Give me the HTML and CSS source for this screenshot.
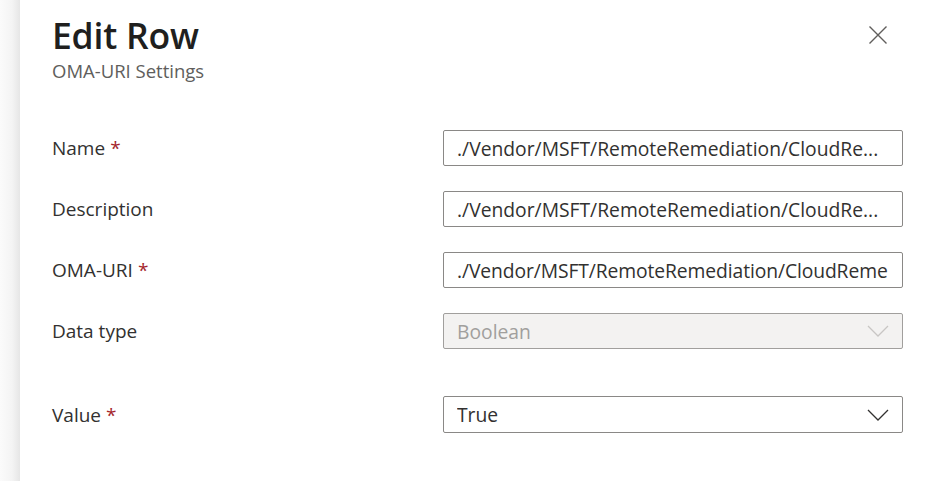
FILE: index.html
```html
<!DOCTYPE html>
<html lang="en">
<head>
<meta charset="utf-8">
<title>Edit Row</title>
<link rel="stylesheet" href="styles.css">
</head>
<body>
<div class="page">
  <div class="edge"></div>
  <main class="panel">
    <header class="head">
      <div class="titles">
        <h1 class="title">Edit Row</h1>
        <div class="subtitle">OMA-URI Settings</div>
      </div>
      <button class="close" aria-label="Close">
        <svg width="20" height="20" viewBox="0 0 20 20"><path d="M1.5 1.5 L18.5 18.5 M18.5 1.5 L1.5 18.5" stroke="#605e5c" stroke-width="1.4" fill="none"/></svg>
      </button>
    </header>
    <form class="form">
      <label class="label">Name <span class="req">*</span></label>
      <div class="field"><span class="val">./Vendor/MSFT/RemoteRemediation/CloudRe...</span></div>

      <label class="label">Description</label>
      <div class="field"><span class="val">./Vendor/MSFT/RemoteRemediation/CloudRe...</span></div>

      <label class="label">OMA-URI <span class="req">*</span></label>
      <div class="field tight"><span class="val">./Vendor/MSFT/RemoteRemediation/CloudReme</span></div>

      <label class="label">Data type</label>
      <div class="field select disabled"><span class="val">Boolean</span>
        <svg class="chev" width="22" height="12" viewBox="0 0 22 12"><path d="M1 1 L11 11 L21 1" stroke="#c8c6c4" stroke-width="1.3" fill="none"/></svg>
      </div>

      <label class="label last">Value <span class="req">*</span></label>
      <div class="field select last"><span class="val">True</span>
        <svg class="chev" width="22" height="12" viewBox="0 0 22 12"><path d="M1 1 L11 11 L21 1" stroke="#323130" stroke-width="1.3" fill="none"/></svg>
      </div>
    </form>
  </main>
</div>
</body>
</html>
```

FILE: styles.css
```css
html, body {
  margin: 0;
  padding: 0;
  background: #ffffff;
}
body {
  font-family: "Open Sans", "Noto Sans", sans-serif;
  color: #323130;
}
.page {
  display: flex;
  width: 933px;
  height: 481px;
  overflow: hidden;
}
.edge {
  width: 20px;
  flex: none;
  background: linear-gradient(to right, #fbfbfb 0%, #f4f4f4 60%, #e6e6e6 100%);
}
.panel {
  flex: 1;
  background: #ffffff;
  padding: 0 30px 0 32px;
}
.head {
  display: flex;
  justify-content: space-between;
  align-items: flex-start;
  padding-top: 12px;
}
.title {
  margin: 0;
  font-size: 35.5px;
  font-weight: 600;
  line-height: 46px;
  color: #201f1e;
  letter-spacing: -0.2px;
}
.subtitle {
  font-size: 18.5px;
  line-height: 24px;
  color: #605e5c;
  margin-top: 1px;
}
.close {
  border: 0;
  background: none;
  padding: 0;
  margin: 13px 15px 0 0;
  width: 20px;
  height: 20px;
  display: flex;
}
.form {
  display: grid;
  grid-template-columns: 391px 460px;
  grid-template-rows: 36px 36px 36px 36px 59px;
  row-gap: 25px;
  margin-top: 47px;
}
.label {
  font-size: 19px;
  display: flex;
  align-items: center;
  color: #323130;
}
.req {
  color: #a4262c;
  margin-left: 5px;
}
.field {
  box-sizing: border-box;
  height: 36px;
  border: 1px solid #8a8886;
  border-radius: 2px;
  display: flex;
  align-items: center;
  padding: 0 12px 0 13px;
  font-size: 19.3px;
  color: #323130;
  overflow: hidden;
  white-space: nowrap;
}
.tight {
  padding-right: 1px;
  letter-spacing: -0.1px;
}
.val {
  flex: 1;
  overflow: hidden;
  white-space: nowrap;
  min-width: 0;
}
.select {
  padding-right: 13px;
}
.disabled {
  background: #f3f2f1;
  border-color: #a19f9d;
  color: #a19f9d;
}
.chev {
  flex: none;
}
.last {
  align-self: end;
  height: 37px;
}
```
